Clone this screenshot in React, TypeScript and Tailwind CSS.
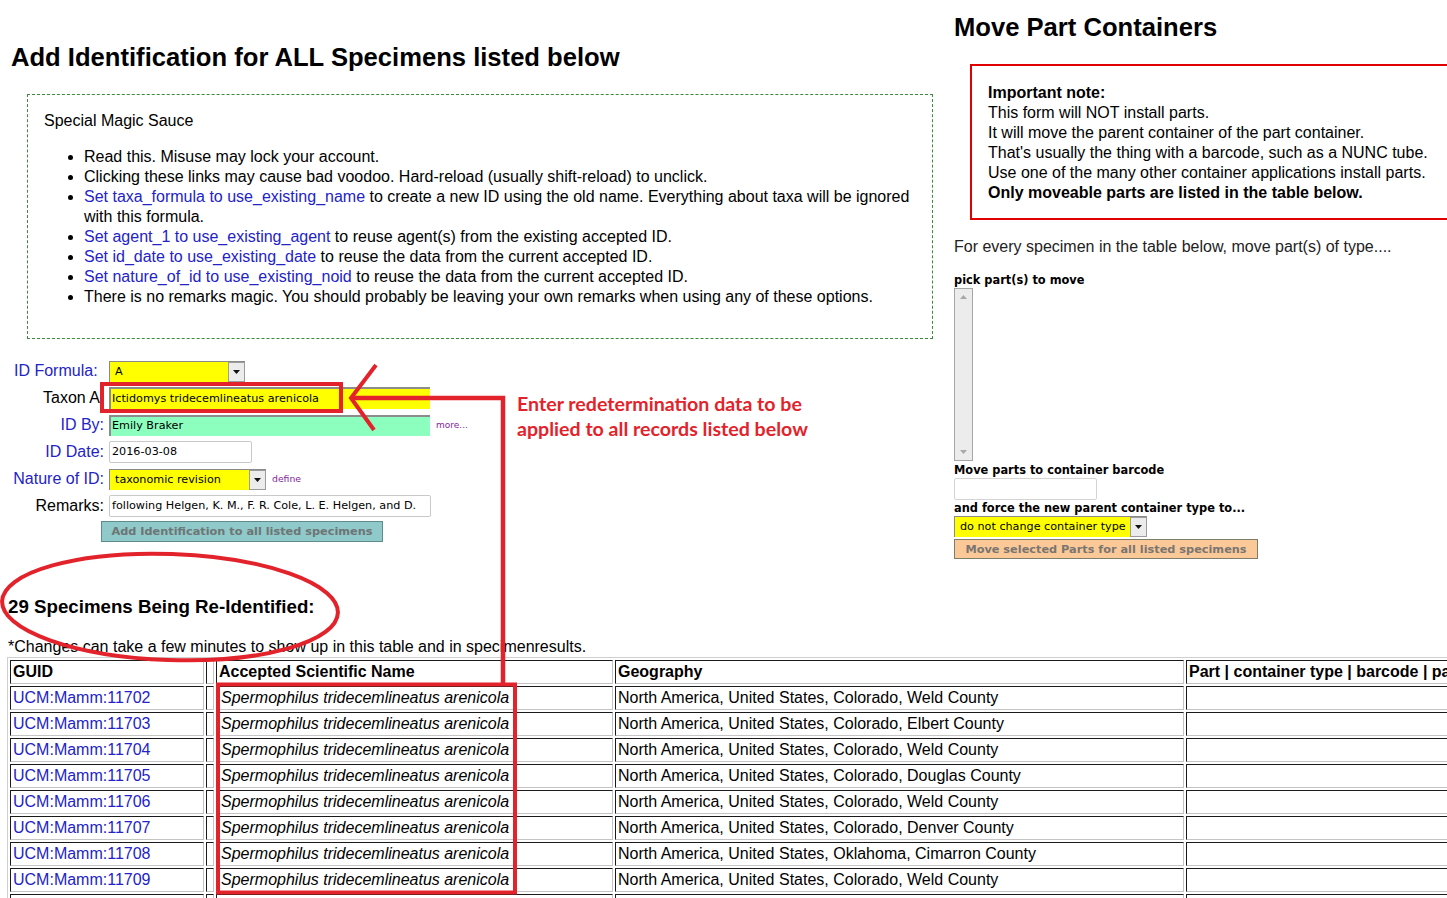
import React from "react";

const tips: { link?: string; text: string }[] = [
  { text: "Read this. Misuse may lock your account." },
  { text: "Clicking these links may cause bad voodoo. Hard-reload (usually shift-reload) to unclick." },
  {
    link: "Set taxa_formula to use_existing_name",
    text: " to create a new ID using the old name. Everything about taxa will be ignored with this formula.",
  },
  { link: "Set agent_1 to use_existing_agent", text: " to reuse agent(s) from the existing accepted ID." },
  { link: "Set id_date to use_existing_date", text: " to reuse the data from the current accepted ID." },
  { link: "Set nature_of_id to use_existing_noid", text: " to reuse the data from the current accepted ID." },
  { text: "There is no remarks magic. You should probably be leaving your own remarks when using any of these options." },
];

const specimens = [
  ["UCM:Mamm:11702", "North America, United States, Colorado, Weld County"],
  ["UCM:Mamm:11703", "North America, United States, Colorado, Elbert County"],
  ["UCM:Mamm:11704", "North America, United States, Colorado, Weld County"],
  ["UCM:Mamm:11705", "North America, United States, Colorado, Douglas County"],
  ["UCM:Mamm:11706", "North America, United States, Colorado, Weld County"],
  ["UCM:Mamm:11707", "North America, United States, Colorado, Denver County"],
  ["UCM:Mamm:11708", "North America, United States, Oklahoma, Cimarron County"],
  ["UCM:Mamm:11709", "North America, United States, Colorado, Weld County"],
  ["UCM:Mamm:11710", "North America, United States, Colorado, Weld County"],
];

const cell =
  "border border-t-[#1a1a1a] border-l-[#1a1a1a] border-b-[#c4c4c4] border-r-[#c4c4c4] px-[2px] py-px h-[24px] leading-[20px] whitespace-nowrap overflow-hidden text-left";

function Picker({ value, className }: { value: string; className: string }) {
  return (
    <div className={`flex h-[21px] border-t border-l border-[#8a8a8a] bg-[#ffff00] ${className}`}>
      <span className="flex-1 pl-[5px] text-[11.2px] leading-[20px] font-['DejaVu_Sans',sans-serif] whitespace-nowrap overflow-hidden">
        {value}
      </span>
      <span className="w-[17px] h-full border border-[#9c9c9c] bg-[#ececec] flex items-center justify-center">
        <svg width="7" height="4" viewBox="0 0 7 4">
          <path d="M0 0h7L3.5 4z" fill="#111" />
        </svg>
      </span>
    </div>
  );
}

function Label({ children, blue, left, extra = "" }: { children: React.ReactNode; blue?: boolean; left?: boolean; extra?: string }) {
  return (
    <div
      className={`w-[91px] shrink-0 whitespace-nowrap ${left ? "text-left" : "text-right"} ${blue ? "text-[#2323c8]" : "text-black"} ${extra}`}
    >
      {children}
    </div>
  );
}

export default function App() {
  return (
    <div className="relative w-[1447px] h-[898px] overflow-hidden bg-white text-black font-['Liberation_Sans',Arial,sans-serif] text-[16px] leading-[20px]">
      <div className="flex">
        {/* left: add identification */}
        <div className="w-[954px] shrink-0">
          <h2 className="pl-[11px] pt-[42px] text-[25.6px] leading-[30px] font-bold">
            Add Identification for ALL Specimens listed below
          </h2>
          <div className="ml-[27px] mt-[22px] w-[906px] h-[245px] border border-dashed border-[#3c8a3c] pl-[16px] pt-[16px]">
            <p>Special Magic Sauce</p>
            <ul className="list-disc pl-[40px] mt-[16px] pr-[14px]">
              {tips.map((t, i) => (
                <li key={i}>
                  {t.link && <span className="text-[#2323c8]">{t.link}</span>}
                  {t.text}
                </li>
              ))}
            </ul>
          </div>

          {/* form */}
          <div className="ml-[13px] mt-[21px] flex flex-col gap-[5px]">
            <div className="flex items-center gap-[5px] h-[22px]">
              <Label blue left extra="pl-px">
                ID Formula:
              </Label>
              <Picker value="A" className="w-[136px]" />
            </div>
            <div className="flex items-center gap-[5px] h-[22px]">
              <Label extra="pr-[4px]">Taxon A</Label>
              <div className="w-[321px] h-[22px] bg-[#ffff00] border-t-2 border-l-2 border-t-[#8c8c8c] border-l-[#8c8c8c] pl-[1px] text-[11.2px] leading-[19px] font-['DejaVu_Sans',sans-serif] whitespace-nowrap overflow-hidden">
                Ictidomys tridecemlineatus arenicola
              </div>
            </div>
            <div className="flex items-center gap-[5px] h-[22px]">
              <Label blue>ID By:</Label>
              <div className="w-[321px] h-[21px] bg-[#8cffbe] border-t-2 border-l-2 border-t-[#8c8c8c] border-l-[#8c8c8c] pl-[1px] text-[11.2px] leading-[18px] font-['DejaVu_Sans',sans-serif] whitespace-nowrap overflow-hidden">
                Emily Braker
              </div>
              <span className="ml-[1px] text-[9px] text-[#85259a] font-['DejaVu_Sans',sans-serif]">more...</span>
            </div>
            <div className="flex items-center gap-[5px] h-[22px]">
              <Label blue>ID Date:</Label>
              <div className="w-[143px] h-[22px] border border-[#c9c9c9] rounded-[2px] pl-[2px] text-[11.2px] leading-[20px] font-['DejaVu_Sans',sans-serif]">
                2016-03-08
              </div>
            </div>
            <div className="flex items-center gap-[5px] h-[22px]">
              <Label blue>Nature of ID:</Label>
              <Picker value="taxonomic revision" className="w-[157px]" />
              <span className="ml-[1px] text-[9.3px] text-[#85259a] font-['DejaVu_Sans',sans-serif]">define</span>
            </div>
            <div className="flex items-center gap-[5px] h-[22px]">
              <Label>Remarks:</Label>
              <div className="w-[322px] h-[22px] border border-[#c9c9c9] rounded-[2px] pl-[2px] text-[11.2px] leading-[20px] font-['DejaVu_Sans',sans-serif] whitespace-nowrap overflow-hidden">
                following Helgen, K. M., F. R. Cole, L. E. Helgen, and D.
              </div>
            </div>
            <button className="ml-[88px] -mt-[1px] w-[282px] h-[21px] bg-[#8fc9c9] border border-[#5e8c8c] text-[#6d7575] text-[11.3px] font-bold font-['DejaVu_Sans',sans-serif] leading-[18px]">
              Add Identification to all listed specimens
            </button>
          </div>
        </div>

        {/* right: move part containers */}
        <div className="w-[560px] shrink-0">
          <h2 className="pt-[12px] text-[25.6px] leading-[30px] font-bold">Move Part Containers</h2>
          <div className="ml-[16px] mt-[22px] h-[156px] border-2 border-[#e00000] pl-[16px] pt-[17px]">
            <p className="font-bold">Important note:</p>
            <p>This form will NOT install parts.</p>
            <p>It will move the parent container of the part container.</p>
            <p>That's usually the thing with a barcode, such as a NUNC tube.</p>
            <p>Use one of the many other container applications install parts.</p>
            <p className="font-bold">Only moveable parts are listed in the table below.</p>
          </div>
          <p className="mt-[17px] text-[#222]">For every specimen in the table below, move part(s) of type....</p>
          <div className="mt-[16px] text-[11.4px] leading-[14px] font-bold font-['DejaVu_Sans',sans-serif]">
            pick part(s) to move
          </div>
          <div className="mt-[1px] w-[19px] h-[173px] border border-[#a6a6a6] bg-[#ececec] flex flex-col justify-between items-center py-[6px]">
            <svg width="7" height="4" viewBox="0 0 7 4">
              <path d="M0 4L3.5 0L7 4z" fill="#a8a8a8" />
            </svg>
            <svg width="7" height="4" viewBox="0 0 7 4">
              <path d="M0 0h7L3.5 4z" fill="#a8a8a8" />
            </svg>
          </div>
          <div className="mt-[2px] text-[11.4px] leading-[14px] font-bold font-['DejaVu_Sans',sans-serif]">
            Move parts to container barcode
          </div>
          <div className="mt-[1px] w-[143px] h-[22px] border border-[#d4d4d4] rounded-[2px]" />
          <div className="mt-[1px] text-[11.4px] leading-[14px] font-bold font-['DejaVu_Sans',sans-serif]">
            and force the new parent container type to...
          </div>
          <Picker value="do not change container type" className="mt-[1px] w-[193px] h-[20px]" />
          <button className="mt-[2px] w-[304px] h-[20px] bg-[#fbc998] border border-[#7d7d6a] text-[#7a7570] text-[11.3px] font-bold font-['DejaVu_Sans',sans-serif] leading-[17px]">
            Move selected Parts for all listed specimens
          </button>
        </div>
      </div>

      {/* specimen table */}
      <div className="pl-[8px] mt-[37px]">
        <h3 className="text-[18.72px] leading-[22px] font-bold">29 Specimens Being Re-Identified:</h3>
        <p className="mt-[19px]">*Changes can take a few minutes to show up in this table and in specimenresults.</p>
        <table className="-ml-px table-fixed border-separate border-spacing-[2px] border border-t-[#cfcfcf] border-l-[#cfcfcf] border-b-[#7a7a7a] border-r-[#7a7a7a] w-[1700px]">
          <thead>
            <tr>
              <th className={`${cell} w-[194px] font-bold`}>GUID</th>
              <th className={`${cell} w-[8px]`}></th>
              <th className={`${cell} w-[397px] font-bold`}>Accepted Scientific Name</th>
              <th className={`${cell} w-[569px] font-bold`}>Geography</th>
              <th className={`${cell} w-[520px] font-bold`}>Part | container type | barcode | part remarks</th>
            </tr>
          </thead>
          <tbody>
            {specimens.map(([guid, geo]) => (
              <tr key={guid}>
                <td className={`${cell} text-[#2323c8]`}>{guid}</td>
                <td className={cell}></td>
                <td className={`${cell} italic pl-[4px]`}>Spermophilus tridecemlineatus arenicola</td>
                <td className={cell}>{geo}</td>
                <td className={cell}></td>
              </tr>
            ))}
          </tbody>
        </table>
      </div>

      {/* red annotations drawn over the screenshot */}
      <svg className="absolute inset-0 pointer-events-none" width="1447" height="898" viewBox="0 0 1447 898">
        <g fill="none" stroke="#e3232b" strokeLinejoin="miter">
          <rect x="102" y="384" width="239" height="27" strokeWidth="4" />
          <path d="M352 398H503V684" strokeWidth="4.5" />
          <path d="M376 365L351 398L374 430" strokeWidth="4" />
          <rect x="218" y="684.5" width="297" height="208" strokeWidth="4" />
          <ellipse cx="170" cy="607" rx="168" ry="53" strokeWidth="4" transform="rotate(2 170 607)" />
        </g>
      </svg>
      <div className="absolute left-[517px] top-[391px] text-[#e3232b] font-['Lato',sans-serif] font-bold text-[19.6px] leading-[25px] pointer-events-none">
        <p>Enter redetermination data to be</p>
        <p>applied to all records listed below</p>
      </div>
    </div>
  );
}
